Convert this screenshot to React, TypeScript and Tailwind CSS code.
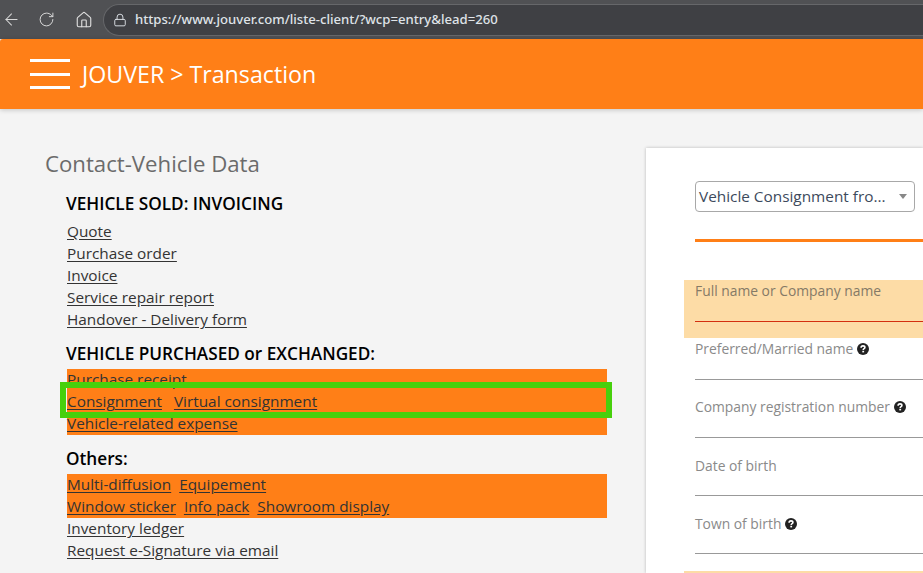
import { House, Lock, RotateCw, ArrowLeft } from 'lucide-react';

const sold = ['Quote', 'Purchase order', 'Invoice', 'Service repair report', 'Handover - Delivery form'];

function DocLink({ children }: { children: string }) {
  return <a className="cursor-pointer text-[#333] underline underline-offset-2">{children}</a>;
}

function HelpIcon() {
  return (
    <svg className="ml-[4px] inline-block align-[-1px]" width="12" height="12" viewBox="0 0 12 12" aria-hidden="true">
      <circle cx="6" cy="6" r="6" fill="#222" />
      <path d="M4.1 4.7C4.1 3.5 5 2.9 6 2.9C7.1 2.9 7.9 3.6 7.9 4.5C7.9 5.7 6.2 5.7 6.2 7" fill="none" stroke="#fff" strokeWidth="1.6" />
      <rect x="5.3" y="7.8" width="1.8" height="1.6" fill="#fff" />
    </svg>
  );
}

function Field({ label, help, highlighted, lower }: { label: string; help?: boolean; highlighted?: boolean; lower?: boolean }) {
  return (
    <div className={`-ml-[11px] h-[58px] pl-[11px] ${highlighted ? 'bg-[#fddca6]' : ''}`}>
      <div className={`h-[42px] border-b ${highlighted ? 'border-[#d32f0f]' : 'border-[#999]'}`}>
        <div className={`relative ${lower ? 'top-[1px]' : 'top-0'} text-[13.85px] leading-[22px] ${highlighted ? 'text-[#857a66]' : 'text-[#8a8a8a]'}`}>
          {label}
          {help ? <HelpIcon /> : null}
        </div>
      </div>
    </div>
  );
}

export default function App() {
  return (
    <div className="flex h-[573px] w-[923px] flex-col overflow-hidden bg-[#f4f4f4] font-['Open_Sans','Noto_Sans',sans-serif]">
      <div className="flex h-[39px] shrink-0 items-center bg-[#505154] pl-[2px] font-['Noto_Sans',sans-serif]">
        <ArrowLeft className="text-[#d8d8d8]" size={19} strokeWidth={1.3} />
        <RotateCw className="ml-[17px] text-[#d8d8d8]" size={17} strokeWidth={1.4} />
        <House className="ml-[20px] text-[#e0e0e0]" size={18} strokeWidth={1.5} />
        <div className="ml-[10px] flex h-[32px] flex-1 items-center rounded-l-full border border-r-0 border-[#66676a] bg-[#3f4044] pl-[9px] text-[#dfe3e8]">
          <Lock size={14} strokeWidth={1.6} />
          <span className="ml-[8px] text-[13.15px] font-medium">https://www.jouver.com/liste-client/?wcp=entry&amp;lead=260</span>
        </div>
      </div>

      <header className="flex h-[70px] shrink-0 items-center rounded-tl-[3px] bg-[#ff7f17] pl-[30px] shadow-[0_1px_5px_rgba(0,0,0,0.2)]">
        <div className="flex h-[30px] w-[40px] flex-col justify-between">
          <span className="h-[3px] bg-white" />
          <span className="h-[3px] bg-white" />
          <span className="h-[3px] bg-white" />
        </div>
        <h1 className="ml-[12px] text-[23.2px] font-normal text-white">JOUVER &gt; Transaction</h1>
      </header>

      <main className="flex min-h-0 flex-1 pt-[39px]">
        <section className="w-[646px] shrink-0 pl-[45px]">
          <h2 className="text-[22.2px] leading-[32px] text-[#6b6b6b]">Contact-Vehicle Data</h2>
          <div className="mt-[11px] w-[562px] pl-[22px] text-[15.35px] leading-[22px]">
            <h3 className="-ml-px text-[17.2px] font-semibold leading-[26px] text-black">VEHICLE SOLD: INVOICING</h3>
            <ul className="mt-[3px]">
              {sold.map((item) => (
                <li key={item}>
                  <DocLink>{item}</DocLink>
                </li>
              ))}
            </ul>

            <h3 className="-ml-px mt-[11px] text-[17.2px] font-semibold leading-[26px] text-black">VEHICLE PURCHASED or EXCHANGED:</h3>
            <ul className="relative mt-[2px] flow-root h-[66px] w-[540px] bg-[#ff7f17]">
              <li className="-mt-px">
                <DocLink>Purchase receipt</DocLink>
              </li>
              <li className="flex gap-[12px]">
                <DocLink>Consignment</DocLink>
                <DocLink>Virtual consignment</DocLink>
              </li>
              <li>
                <DocLink>Vehicle-related expense</DocLink>
              </li>
              <span className="absolute left-[-7px] top-[13px] h-[36px] w-[552px] border-[6px] border-[#47d00c]" />
            </ul>

            <h3 className="-ml-px mt-[11px] text-[17.2px] font-semibold leading-[26px] text-black">Others:</h3>
            <ul className="mt-[2px] flow-root h-[44px] w-[540px] bg-[#ff7f17]">
              <li className="-mt-px flex gap-[8px]">
                <DocLink>Multi-diffusion</DocLink>
                <DocLink>Equipement</DocLink>
              </li>
              <li className="flex gap-[8px]">
                <DocLink>Window sticker</DocLink>
                <DocLink>Info pack</DocLink>
                <DocLink>Showroom display</DocLink>
              </li>
            </ul>
            <ul className="-mt-px">
              <li>
                <DocLink>Inventory ledger</DocLink>
              </li>
              <li>
                <DocLink>Request e-Signature via email</DocLink>
              </li>
            </ul>
          </div>
        </section>

        <section className="flex-1 bg-white pl-[49px] shadow-[0_0_3px_rgba(0,0,0,0.25)]">
          <div className="mt-[33px] flex h-[31px] w-[220px] items-center justify-between rounded-[4px] border border-[#a8a8a8] pl-[3px] pr-[7px] text-[15.35px] text-[#3d4a5c]">
            <span>Vehicle Consignment fro...</span>
            <span className="h-0 w-0 border-x-[4px] border-t-[5px] border-x-transparent border-t-[#888]" />
          </div>
          <div className="mt-[27px] h-[3px] bg-[#ff7f17]" />
          <div className="mt-[38px]">
            <Field label="Full name or Company name" highlighted />
            <Field label="Preferred/Married name" help />
            <Field label="Company registration number" help />
            <Field label="Date of birth" lower />
            <Field label="Town of birth" help lower />
            <div className="-ml-[11px] mt-[1px] h-[4px] bg-[#fddca6]" />
          </div>
        </section>
      </main>
    </div>
  );
}
